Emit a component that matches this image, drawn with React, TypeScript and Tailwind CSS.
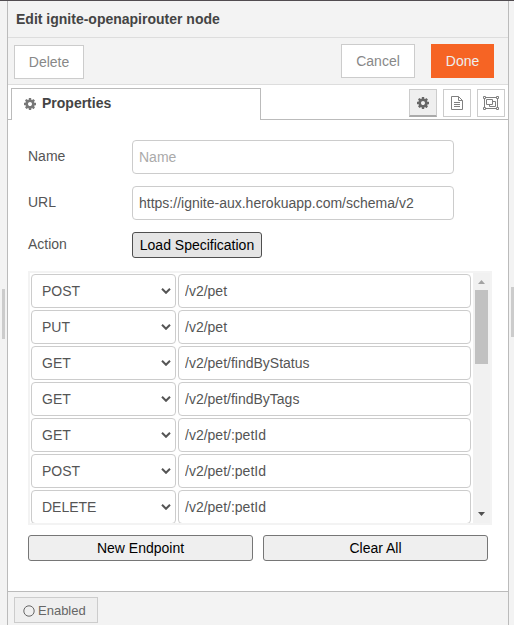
import React from "react";

const endpoints = [
  { method: "POST", path: "/v2/pet" },
  { method: "PUT", path: "/v2/pet" },
  { method: "GET", path: "/v2/pet/findByStatus" },
  { method: "GET", path: "/v2/pet/findByTags" },
  { method: "GET", path: "/v2/pet/:petId" },
  { method: "POST", path: "/v2/pet/:petId" },
  { method: "DELETE", path: "/v2/pet/:petId" },
];

function Gear({ className }: { className: string }) {
  return (
    <svg viewBox="0 128 1536 1536" className={className} fill="currentColor">
      <path d="M1024 896q0-106-75-181t-181-75-181 75-75 181 75 181 181 75 181-75 75-181zm512-109v222q0 12-8 23t-20 13l-185 28q-19 54-39 91 35 50 107 138 10 12 10 25t-9 23q-27 37-99 108t-94 71q-12 0-26-9l-138-108q-44 23-91 38-16 136-29 186-7 28-36 28h-222q-14 0-24.5-8.5t-11.5-21.5l-28-184q-49-16-90-37l-141 107q-10 9-25 9-14 0-25-11-126-114-165-168-7-10-7-23 0-12 8-23 15-21 51-66.5t54-70.5q-27-50-41-99l-183-27q-13-2-21-12.5t-8-23.5v-222q0-12 8-23t19-13l186-28q14-46 39-92-40-57-107-138-10-12-10-24 0-10 9-23 26-36 98.5-107.5t94.5-71.5q13 0 26 10l138 107q44-23 91-38 16-136 29-186 7-28 36-28h222q14 0 24.5 8.5t11.5 21.5l28 184q49 16 90 37l142-107q9-9 24-9 13 0 25 10 129 119 165 170 7 8 7 22 0 12-8 23-15 21-51 66.5t-54 70.5q26 50 41 98l183 28q13 2 21 12.5t8 23.5z" />
    </svg>
  );
}

function DocIcon() {
  return (
    <svg viewBox="0 0 12 14" className="h-[14px] w-3 shrink-0" fill="none" stroke="currentColor">
      <path d="M.5.5h7l4 4v9H.5zM7.5.5v4h4M3 6.5h6M3 8.5h6M3 10.5h6" />
    </svg>
  );
}

function GroupIcon() {
  return (
    <svg viewBox="0 0 16 14" className="h-[14px] w-4 shrink-0" fill="none" stroke="currentColor">
      <path d="M2.5 1.5h11M2.5 12.5h11M1.5 2.5v9M14.5 2.5v9" />
      <path d="M.5.5h2v2h-2zM13.5.5h2v2h-2zM.5 11.5h2v2h-2zM13.5 11.5h2v2h-2z" />
      <path d="M3.5 3.5h6v5h-6zM9.5 5.5h3v5h-6v-2" />
    </svg>
  );
}

function Chevron() {
  return (
    <svg viewBox="0 0 10 6" className="h-1.5 w-2.5" fill="none" stroke="#555" strokeWidth="2">
      <path d="M1 .8l4 4 4-4" />
    </svg>
  );
}

const field =
  "h-[34px] rounded border border-[#ccc] bg-white text-[14px] text-[#555] placeholder:text-[#aaa] outline-none px-1.5";
const toolButton = "flex h-[34px] items-center justify-center border border-[#ccc] bg-white text-[14px] text-[#888]";
const nativeButton =
  "flex h-[26px] items-center justify-center rounded-[3px] border border-[#767676] bg-[#efefef] text-[14px] text-black";
const iconTab = "flex h-7 w-7 items-center justify-center border border-[#ccc] bg-white text-[#808080]";

export default function App() {
  return (
    <div className="flex h-[625px] w-[514px] flex-col overflow-hidden border-t border-[#514c50] bg-[#f3f3f3] font-['Liberation_Sans',Arial,sans-serif] text-[14px] leading-5 text-[#555]">
      <div className="flex min-h-0 flex-1">
        <div className="w-[7px] shrink-0 pl-0.5 pt-[288px]">
          <div className="h-[50px] w-[3px] bg-[#ccc]" />
        </div>
        <main className="flex w-[502px] shrink-0 flex-col border-x border-[#bbb] bg-white">
          <header className="flex h-[37px] items-center border-b border-[#ddd] bg-[#f3f3f3] pl-2 font-bold text-[#444]">
            Edit ignite-openapirouter node
          </header>
          <div className="flex h-[47px] items-start border-b border-[#ddd] bg-[#f3f3f3] pl-1.5 pr-3.5 pt-1.5">
            <button className={`${toolButton} mt-px w-[70px]`}>Delete</button>
            <button className={`${toolButton} ml-auto w-[74px]`}>Cancel</button>
            <button className="ml-4 flex h-[34px] w-[63px] items-center justify-center bg-[#f66424] text-[14px] text-[#eee]">
              Done
            </button>
          </div>
          <div className="flex h-[35px] pt-[3px]">
            <div className="w-[3px] border-b border-[#bbb]" />
            <div className="flex w-[250px] items-center border-x border-t border-[#bbb] pb-[3px] pl-3 font-bold text-[#444]">
              <Gear className="mr-1.5 mt-px h-3 w-3 text-[#777]" />
              Properties
            </div>
            <div className="flex flex-1 justify-end gap-1.5 border-b border-[#bbb] pr-[3px] pt-px">
              <button className="flex h-7 w-7 items-center justify-center border border-b-2 border-[#ccc] border-b-[#aaa] bg-[#efefef] text-[#666]">
                <Gear className="mt-px h-3 w-3" />
              </button>
              <button className={iconTab}>
                <DocIcon />
              </button>
              <button className={iconTab}>
                <GroupIcon />
              </button>
            </div>
          </div>
          <div className="flex flex-1 flex-col px-5 pt-5">
            <div className="mb-3 flex">
              <label className="w-[104px] pt-1.5">Name</label>
              <input className={`${field} w-[322px]`} placeholder="Name" />
            </div>
            <div className="mb-3 flex">
              <label className="w-[104px] pt-1.5">URL</label>
              <input className={`${field} w-[322px]`} defaultValue="https://ignite-aux.herokuapp.com/schema/v2" />
            </div>
            <div className="mb-[13px] flex">
              <label className="w-[104px] pt-0.5">Action</label>
              <button className="flex h-[26px] w-[130px] items-center justify-center rounded-[3px] border border-[#4f4f4f] bg-[#e5e5e5] text-[14px] text-black">
                Load Specification
              </button>
            </div>
            <div className="flex h-[254px] w-[464px] shrink-0 border-2 border-[#f3f3f3]">
              <div className="flex w-[443px] flex-col gap-0.5 overflow-hidden pl-px pt-px">
                {endpoints.map((e, i) => (
                  <div key={i} className="flex shrink-0 gap-0.5">
                    <div className="flex h-[34px] w-[145px] items-center justify-between rounded border border-[#ccc] pl-2.5 pr-1">
                      {e.method}
                      <Chevron />
                    </div>
                    <input className={`${field} w-[293px]`} defaultValue={e.path} />
                  </div>
                ))}
              </div>
              <div className="flex w-[17px] flex-col items-center bg-[#f1f1f1]">
                <svg viewBox="0 0 17 17" className="h-[17px] w-[17px]" fill="#a3a3a3">
                  <path d="M5 11h7L8.500 7z" />
                </svg>
                <div className="h-[74px] w-[13px] bg-[#c1c1c1]" />
                <svg viewBox="0 0 17 17" className="mt-auto h-[17px] w-[17px]" fill="#505050">
                  <path d="M5 6h7l-3.500 4z" />
                </svg>
              </div>
            </div>
            <div className="mt-2.5 flex gap-2.5">
              <button className={`${nativeButton} w-[225px]`}>New Endpoint</button>
              <button className={`${nativeButton} w-[225px]`}>Clear All</button>
            </div>
          </div>
          <footer className="h-[34px] border-t border-[#bbb] bg-[#f3f3f3] pl-1.5 pt-[5px]">
            <button className="flex h-[26px] w-[84px] items-center border border-[#ccc] bg-[#efefef] pl-2 pt-px text-[13px] text-[#666]">
              <svg viewBox="0 0 12 12" className="mr-[3px] h-3 w-3" fill="none" stroke="currentColor">
                <circle cx="6" cy="6" r="5.200" />
              </svg>
              Enabled
            </button>
          </footer>
        </main>
        <div className="flex flex-1 justify-end pt-[286px]">
          <div className="h-[50px] w-[3px] bg-[#ccc]" />
        </div>
      </div>
    </div>
  );
}
